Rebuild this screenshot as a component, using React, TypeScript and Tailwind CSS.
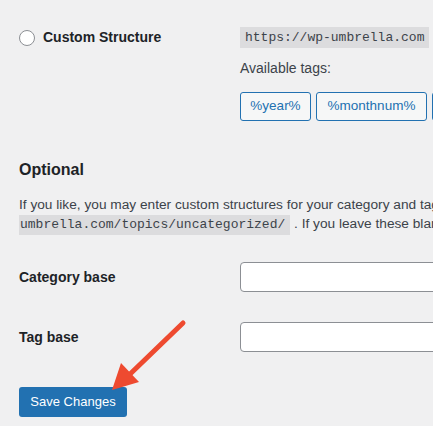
import React from 'react'

const mono = "font-['Liberation_Mono',monospace]"

const TagButton = ({ label, width }: { label: string; width: string }) => (
  <button
    className={`${width} h-[29px] shrink-0 rounded-[3px] border border-[#2271b1] bg-[#f6f7f7] text-[13.5px] text-[#2271b1]`}
  >
    {label}
  </button>
)

const FieldRow = ({ label, className }: { label: string; className: string }) => (
  <div className={`flex h-[30px] items-center ${className}`}>
    <label className="w-[221px] shrink-0 text-[14px] font-bold text-[#1d2327]">{label}</label>
    <input className="h-[30px] w-[240px] shrink-0 rounded-[4px] border border-[#8c8f94] bg-white" />
  </div>
)

const App = () => {
  return (
    <div className="relative h-[426px] w-[433px] overflow-hidden bg-[#f0f0f1] font-['Liberation_Sans',Arial,sans-serif] text-[13px] text-[#3c434a]">
      <div className="pl-[19px] pt-[27px]">
        {/* custom structure */}
        <div className="flex items-start">
          <div className="flex h-[21px] w-[221px] shrink-0 items-center gap-[8px]">
            <span className="h-[16px] w-[16px] shrink-0 rounded-full border border-[#8c8f94] bg-white"></span>
            <span className="text-[14px] font-bold text-[#1d2327]">Custom Structure</span>
          </div>
          <div className="flex flex-col">
            <code className={`${mono} h-[21px] w-fit whitespace-nowrap bg-[#dcdcde] px-[5px] text-[13px] leading-[21px] text-[#3c434a]`}>
              https://wp-umbrella.com
            </code>
            <div className="mt-[10px] text-[14px] leading-[20px]">Available tags:</div>
            <div className="mt-[14px] flex gap-[5px]">
              <TagButton label="%year%" width="w-[71px]" />
              <TagButton label="%monthnum%" width="w-[111px]" />
              <TagButton label="%day%" width="w-[60px]" />
            </div>
          </div>
        </div>

        {/* optional */}
        <h2 className="mt-[39px] text-[16px] font-bold leading-[20px] text-[#1d2327]">Optional</h2>
        <div className="mt-[16px] whitespace-nowrap text-[13.7px] leading-[17px]">
          If you like, you may enter custom structures for your category and tag base URLs here. For example, using{' '}
          <code className={`${mono} bg-[#dcdcde] text-[13px]`}>https://wp-</code>
        </div>
        <div className="h-[20px] whitespace-nowrap text-[13.7px] leading-[20px]">
          <code className={`${mono} inline-block h-[20px] bg-[#dcdcde] pl-[1px] pr-[5px] text-[13px] leading-[20px]`}>
            umbrella.com/topics/uncategorized/
          </code>{' '}
          . If you leave these blank the defaults will be used.
        </div>

        <FieldRow label="Category base" className="mt-[28px]" />
        <FieldRow label="Tag base" className="mt-[30px]" />

        <button className="mt-[35px] h-[30px] w-[108px] rounded-[3px] bg-[#2271b1] text-[13px] text-white">
          Save Changes
        </button>
      </div>

      {/* annotation arrow */}
      <svg className="pointer-events-none absolute inset-0" width="433" height="426" viewBox="0 0 433 426">
        <line x1="183" y1="323" x2="127" y2="377" stroke="#ee4a30" strokeWidth="5" strokeLinecap="round" />
        <polygon points="112,390 121,363 139,382" fill="#ee4a30" />
      </svg>
    </div>
  )
}

export default App
